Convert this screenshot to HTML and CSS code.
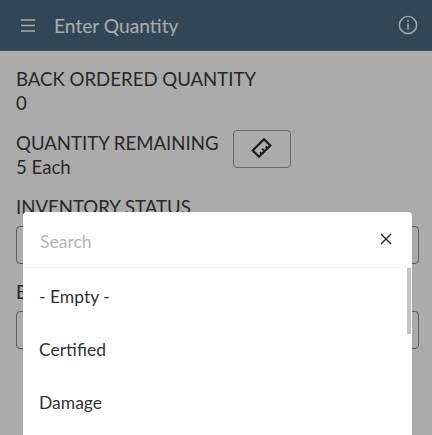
FILE: index.html
```html
<!DOCTYPE html>
<html lang="en">
<head>
  <meta charset="UTF-8">
  <meta name="viewport" content="width=device-width, initial-scale=1.0">
  <title>Enter Quantity</title>
  <link rel="stylesheet" href="styles.css">
</head>
<body>
  <header class="app-bar">
    <button class="menu-btn" aria-label="Menu">
      <svg width="14" height="13" viewBox="0 0 14 13"><path d="M0 1h14M0 6.5h14M0 12h14" stroke="currentColor" stroke-width="1.4" fill="none"/></svg>
    </button>
    <h1 class="app-title">Enter Quantity</h1>
    <svg class="info-icon" width="20" height="20" viewBox="0 0 20 20" fill="none" stroke="currentColor">
      <circle cx="10" cy="10" r="8.6" stroke-width="1.4"/>
      <path d="M10 8.6v6.2" stroke-width="1.4"/>
      <circle cx="10" cy="5.8" r="0.9" fill="currentColor" stroke="none"/>
    </svg>
  </header>

  <main class="content">
    <div class="field">
      <div class="field-label">BACK ORDERED QUANTITY</div>
      <div class="field-value">0</div>
    </div>
    <div class="field field-row">
      <div>
        <div class="field-label">QUANTITY REMAINING</div>
        <div class="field-value">5 Each</div>
      </div>
      <button class="measure-btn" aria-label="Measure">
        <svg width="22" height="22" viewBox="0 0 22 22" fill="none" stroke="currentColor" stroke-width="2.2">
          <path d="M19.3 7.5 13 1.2 1.7 12.5 8 18.8z"/>
          <path d="M16.5 10.3 14.7 8.5M13.6 13.2 11 10.6M10.8 16 9 14.2" stroke-width="1.8"/>
        </svg>
      </button>
    </div>
    <div class="field">
      <div class="field-label">INVENTORY STATUS</div>
      <div class="select-box"></div>
    </div>
    <div class="field">
      <div class="field-label">BIN</div>
      <div class="select-box"></div>
    </div>
  </main>

  <div class="scrim"></div>

  <div class="picker">
    <div class="picker-search">
      <span class="search-placeholder">Search</span>
      <svg class="close-icon" width="12" height="12" viewBox="0 0 12 12"><path d="M1 1l10 10M11 1 1 11" stroke="currentColor" stroke-width="1.4" fill="none"/></svg>
    </div>
    <ul class="picker-list">
      <li>- Empty -</li>
      <li>Certified</li>
      <li>Damage</li>
    </ul>
    <div class="picker-scrollbar"></div>
  </div>
</body>
</html>
```

FILE: styles.css
```css
* {
  margin: 0;
  padding: 0;
  box-sizing: border-box;
}

html, body {
  height: 100%;
  overflow: hidden;
}

body {
  background-color: #fff;
  color: #3d3c3a;
  font-family: Lato, "Open Sans", sans-serif;
  font-size: 18.6px;
}

.app-bar {
  display: flex;
  align-items: center;
  height: 51px;
  padding: 0 14px 0 21px;
  background-color: #496b82;
  border-bottom: 1px solid #6e8494;
  color: #fff;
}

.menu-btn {
  display: flex;
  margin-right: 19px;
  border: none;
  background: none;
  color: inherit;
}

.app-title {
  flex: 1;
  font-size: 19.2px;
  font-weight: 400;
}

.content {
  padding: 16px 13px 0 16px;
}

.field {
  margin-bottom: 16px;
  line-height: 24px;
}

.field-row {
  display: flex;
  align-items: flex-start;
  gap: 15px;
}

.select-box {
  height: 38px;
  margin-top: 7px;
  border: 1px solid #8a8a8a;
  border-radius: 4px;
}

.measure-btn {
  display: flex;
  align-items: center;
  justify-content: center;
  width: 58px;
  height: 38px;
  margin-top: -1px;
  border: 1px solid #9a9a9a;
  border-radius: 4px;
  background: none;
  color: #2b2a28;
}

.scrim {
  position: absolute;
  inset: 0;
  background-color: rgba(0, 0, 0, 0.33);
}

.picker {
  position: absolute;
  top: 212px;
  left: 23px;
  width: 389px;
  height: 223px;
  background-color: #fff;
  border-radius: 4px 4px 0 0;
  font-size: 17.5px;
}

.picker-search {
  display: flex;
  align-items: center;
  justify-content: space-between;
  height: 56px;
  padding: 3px 20px 0 17px;
  border-bottom: 1px solid #f2f2f2;
}

.search-placeholder {
  color: #b4b4b4;
}

.close-icon {
  margin-top: -5px;
  color: #222;
}

.picker-list {
  padding-top: 2px;
  list-style: none;
}

.picker-list li {
  height: 53px;
  padding-left: 16px;
  line-height: 53px;
  color: #333;
}

.picker-scrollbar {
  position: absolute;
  top: 56px;
  right: 1px;
  width: 4px;
  height: 66px;
  background-color: #c4c4c4;
}
```
